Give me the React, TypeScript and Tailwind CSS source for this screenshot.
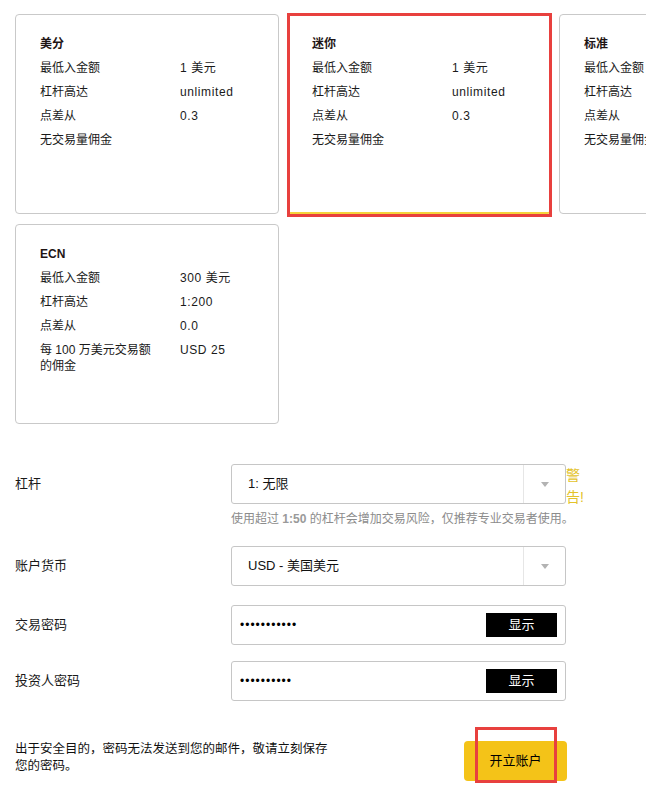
import React from "react";

type Row = { label: string; value: string };
type Card = { title: string; rows: Row[]; selected?: boolean };

const cards: Card[] = [
  {
    title: "美分",
    rows: [
      { label: "最低入金额", value: "1 美元" },
      { label: "杠杆高达", value: "unlimited" },
      { label: "点差从", value: "0.3" },
      { label: "无交易量佣金", value: "" },
    ],
  },
  {
    title: "迷你",
    selected: true,
    rows: [
      { label: "最低入金额", value: "1 美元" },
      { label: "杠杆高达", value: "unlimited" },
      { label: "点差从", value: "0.3" },
      { label: "无交易量佣金", value: "" },
    ],
  },
  {
    title: "标准",
    rows: [
      { label: "最低入金额", value: "100 美元" },
      { label: "杠杆高达", value: "unlimited" },
      { label: "点差从", value: "0.5" },
      { label: "无交易量佣金", value: "" },
    ],
  },
  {
    title: "ECN",
    rows: [
      { label: "最低入金额", value: "300 美元" },
      { label: "杠杆高达", value: "1:200" },
      { label: "点差从", value: "0.0" },
      { label: "每 100 万美元交易额的佣金", value: "USD 25" },
    ],
  },
];

const font = "font-['Liberation_Sans','Noto_Sans_CJK_SC',sans-serif]";

function AccountCard({ card }: { card: Card }) {
  return (
    <div
      className={
        "relative h-[200px] w-[264px] rounded-[4px] border border-[#c9c9c9] bg-white pl-[24px] pt-[21px] " +
        (card.selected ? "border-b-2 border-b-[#f5d33c]" : "")
      }
    >
      <div className="text-[12px] font-bold leading-[16px] text-[#1e1414]">{card.title}</div>
      {card.rows.map((r, i) => (
        <div key={i} className="mt-2 flex text-[12px] leading-[16px] text-[#1a1a1a]">
          <div className="w-[140px] shrink-0 pr-[22px]">{r.label}</div>
          <div className="whitespace-nowrap tracking-[0.6px]">{r.value}</div>
        </div>
      ))}
      {card.selected && (
        <div className="pointer-events-none absolute left-[-1px] top-[-2px] h-[204px] w-[265px] border-[3px] border-[#e8403e]" />
      )}
    </div>
  );
}

function Arrow() {
  return (
    <div className="flex h-full w-[42px] items-center justify-center border-l border-[#e6e6e6]">
      <svg width="8" height="5" viewBox="0 0 8 5">
        <path d="M0 0 L8 0 L4 5 Z" fill="#b3b3b3" />
      </svg>
    </div>
  );
}

function SelectBox({ text }: { text: string }) {
  return (
    <div className="flex h-[40px] w-[335px] shrink-0 items-center rounded-[3px] border border-[#c6c6c6] bg-white">
      <div className="flex-1 pl-[16px] text-[13px] text-[#111]">{text}</div>
      <Arrow />
    </div>
  );
}

function PasswordBox({ dots }: { dots: number }) {
  return (
    <div className="flex h-[40px] w-[335px] shrink-0 items-center rounded-[3px] border border-[#c6c6c6] bg-white">
      <div className="flex-1 pl-[8px] text-[12px] tracking-[1px] text-black">{"•".repeat(dots)}</div>
      <div className="mr-[8px] flex h-[24px] w-[71px] items-center justify-center bg-black text-[13px] text-white">
        显示
      </div>
    </div>
  );
}

function Label({ children }: { children: React.ReactNode }) {
  return (
    <div className="flex h-[40px] w-[231px] shrink-0 items-center pl-[15px] text-[13px] text-[#1a1a1a]">
      {children}
    </div>
  );
}

export default function App() {
  return (
    <div className={"w-full overflow-hidden bg-white pb-[10px] " + font}>
      <div className="pl-[15px] pt-[14px]">
        <div className="grid w-[808px] grid-cols-[repeat(3,264px)] gap-x-2 gap-y-[10px]">
          {cards.map((c, i) => (
            <AccountCard key={i} card={c} />
          ))}
        </div>
      </div>

      <div className="mt-[40px] flex h-[40px] items-start">
        <Label>杠杆</Label>
        <SelectBox text="1: 无限" />
        <div className="h-[40px] w-[20px] text-[14px] leading-[22px] text-[#e3c22a]">警告!</div>
      </div>
      <div className="ml-[231px] mt-[7px] text-[12px] leading-[16px] text-[#8c8c8c]">
        使用超过 <span className="font-bold text-[#9a9a9a]">1:50</span> 的杠杆会增加交易风险，仅推荐专业交易者使用。
      </div>

      <div className="mt-[19px] flex items-start">
        <Label>账户货币</Label>
        <SelectBox text="USD - 美国美元" />
      </div>

      <div className="mt-[19px] flex items-start">
        <Label>交易密码</Label>
        <PasswordBox dots={11} />
      </div>

      <div className="mt-[16px] flex items-start">
        <Label>投资人密码</Label>
        <PasswordBox dots={10} />
      </div>

      <div className="mt-[40px] flex items-start">
        <div className="w-[464px] shrink-0 pl-[15px]">
          <div className="w-[320px] text-[12.5px] leading-[17px] text-[#111]">
            出于安全目的，密码无法发送到您的邮件，敬请立刻保存您的密码。
          </div>
        </div>
        <div className="relative">
          <div className="flex h-[40px] w-[103px] items-center justify-center rounded-[4px] bg-[#f4c318] text-[13px] text-black">
            开立账户
          </div>
          <div className="pointer-events-none absolute left-[11px] top-[-14px] h-[56px] w-[82px] border-[3px] border-[#e8403e]" />
        </div>
      </div>
    </div>
  );
}
